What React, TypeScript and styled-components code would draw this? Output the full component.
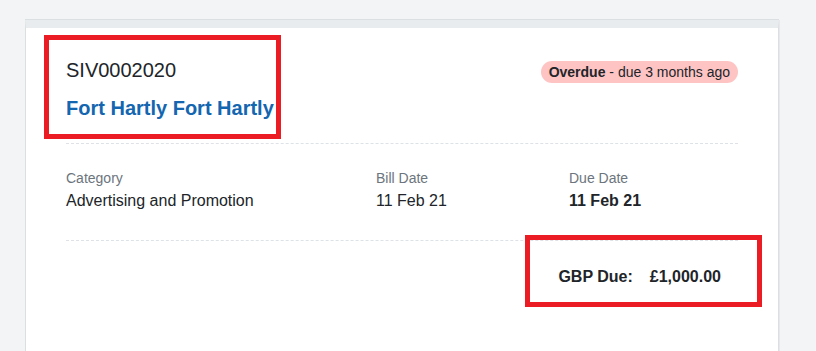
import React from "react";
import styled, { createGlobalStyle } from "styled-components";

const GlobalStyle = createGlobalStyle`
  html, body {
    margin: 0;
    padding: 0;
    background: #f3f4f6;
    font-family: "Liberation Sans", Arial, sans-serif;
    color: #212529;
  }
`;

const Page = styled.div`
  padding: 20px 37px 0 25px;
  height: 351px;
  overflow: hidden;
  box-sizing: border-box;
`;

const Card = styled.div`
  background: #fff;
  border: 1px solid #dcdfe1;
  border-top: 8px solid #e9ecee;
  box-shadow: 0 -1px 0 #dcdfe1, 1px 0 0 #e6e8ea;
  padding: 0 40px;
  min-height: 400px;
`;

const Header = styled.div`
  display: flex;
  justify-content: space-between;
  align-items: flex-start;
  padding: 30px 0 23px;
  border-bottom: 1px dashed #dee2e6;
`;

const TitleBlock = styled.div`
  position: relative;
`;

const InvoiceNo = styled.div`
  font-size: 20px;
  line-height: 24px;
`;

const Customer = styled.div`
  margin-top: 14px;
  font-size: 20px;
  line-height: 24px;
  font-weight: 700;
  color: #1466b0;
`;

const Badge = styled.span`
  margin-top: 3px;
  background: #fec4c4;
  border-radius: 11px;
  padding: 0 8px;
  font-size: 14px;
  line-height: 22px;
  color: #212529;

  strong {
    font-weight: 700;
  }
`;

const Details = styled.div`
  display: grid;
  grid-template-columns: 310px 193px 1fr;
  padding: 24px 0 28px;
  border-bottom: 1px dashed #dee2e6;
`;

const Label = styled.div`
  font-size: 14px;
  line-height: 20px;
  color: #6c757d;
`;

const Value = styled.div<{ $bold?: boolean }>`
  margin-top: 2px;
  font-size: 16px;
  line-height: 22px;
  font-weight: ${(p) => (p.$bold ? 700 : 400)};
`;

const TotalRow = styled.div`
  display: flex;
  justify-content: flex-end;
  padding: 26px 17px 0 0;
`;

const Total = styled.div`
  position: relative;
  display: flex;
  gap: 17px;
  font-size: 16px;
  line-height: 20px;
  font-weight: 700;
`;

// red annotation boxes drawn over the screenshot
const Highlight = styled.div<{ $top: number; $left: number; $w: number; $h: number }>`
  position: absolute;
  top: ${(p) => p.$top}px;
  left: ${(p) => p.$left}px;
  width: ${(p) => p.$w}px;
  height: ${(p) => p.$h}px;
  border: 5px solid #ec1c24;
  box-sizing: border-box;
  pointer-events: none;
`;

const details = [
  { label: "Category", value: "Advertising and Promotion" },
  { label: "Bill Date", value: "11 Feb 21" },
  { label: "Due Date", value: "11 Feb 21", bold: true },
];

export default function App() {
  return (
    <Page>
      <GlobalStyle />
      <Card>
        <Header>
          <TitleBlock>
            <InvoiceNo>SIV0002020</InvoiceNo>
            <Customer>Fort Hartly Fort Hartly</Customer>
            <Highlight $top={-23} $left={-22} $w={237} $h={104} />
          </TitleBlock>
          <Badge>
            <strong>Overdue</strong> - due 3 months ago
          </Badge>
        </Header>
        <Details>
          {details.map((d) => (
            <div key={d.label}>
              <Label>{d.label}</Label>
              <Value $bold={d.bold}>{d.value}</Value>
            </div>
          ))}
        </Details>
        <TotalRow>
          <Total>
            <span>GBP Due:</span>
            <span>£1,000.00</span>
            <Highlight $top={-32} $left={-33} $w={237} $h={72} />
          </Total>
        </TotalRow>
      </Card>
    </Page>
  );
}
